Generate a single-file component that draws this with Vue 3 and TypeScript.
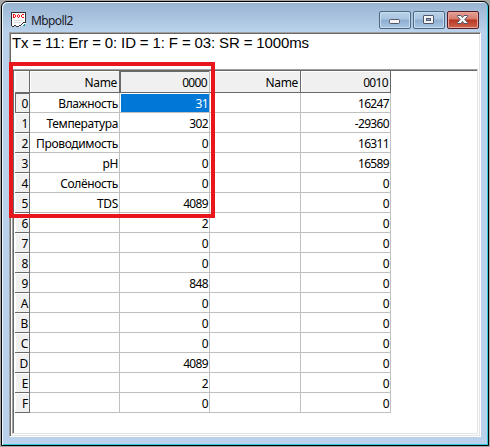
<script setup lang="ts">
import { ref } from 'vue'

interface Row {
  id: string
  name: string
  low: number
  high: number
}

const status = "Tx = 11: Err = 0: ID = 1: F = 03: SR = 1000ms"
const selected = ref("0")

const names = ["Влажность", "Температура", "Проводимость", "pH", "Солёность", "TDS"]
const low = [31, 302, 0, 0, 0, 4089, 2, 0, 0, 848, 0, 0, 0, 4089, 2, 0]
const high = [16247, -29360, 16311, 16589, 0, 0, 0, 0, 0, 0, 0, 0, 0, 0, 0, 0]

const rows: Row[] = low.map((value, i) => ({
  id: i.toString(16).toUpperCase(),
  name: names[i] ?? "",
  low: value,
  high: high[i]
}))
</script>

<template>
<div class="desktop">
  <div class="window">
    <div class="title-bar">
      <svg class="doc-icon" width="16" height="16" viewBox="0 0 16 16" shape-rendering="crispEdges">
        <path d="M1 1H15V11L12 14H10L8 15H6L4 14H2L1 15Z" fill="#fff" />
        <path d="M0 0H15V1H0ZM0 0H1V14H0ZM14 0H15V11H14ZM1 14H3V15H1ZM3 13H5V14H3ZM5 14H8V15H5ZM8 13H10V14H8ZM10 12H11V13H10ZM11 11H12V12H11ZM12 10H15V11H12Z" fill="#333" />
        <path d="M2 2H4V3H2ZM2 2H3V6H2ZM2 5H4V6H2ZM4 3H5V5H4ZM6 3H7V5H6ZM7 2H8V3H7ZM7 5H8V6H7ZM8 3H9V5H8ZM10 3H11V5H10ZM11 2H13V3H11ZM11 5H13V6H11Z" fill="#e81010" />
        <path d="M3 8H12V9H3ZM3 10H10V11H3Z" fill="#ddd" />
        <path d="M13 12H14V13H13ZM12 13H14V14H12Z" fill="#168d8d" />
      </svg>
      <div class="title">Mbpoll2</div>
      <div class="buttons">
        <button class="button">
          <svg width="32" height="18" viewBox="0 0 32 18">
            <rect x="10.5" y="8.5" width="10" height="4" rx="1" fill="#f5f5f5" stroke="#535666" />
          </svg>
        </button>
        <button class="button">
          <svg width="32" height="18" viewBox="0 0 32 18">
            <rect x="10.5" y="4.5" width="10" height="8" rx="0.5" fill="#f5f5f5" stroke="#535666" />
            <rect x="13.5" y="7.5" width="4" height="2" fill="#8bacd0" stroke="#535666" />
          </svg>
        </button>
        <button class="button close">
          <svg width="32" height="18" viewBox="0 0 32 18">
            <path d="M10.5 4.5H14L15.5 6.5L17 4.5H20.5V5.5L17.8 8.5L20.5 11.5V12.5H17L15.5 10.5L14 12.5H10.5V11.5L13.2 8.5L10.5 5.5Z" fill="#f5f5f5" stroke="#535666" />
          </svg>
        </button>
      </div>
    </div>
    <div class="client">
      <div class="status">{{ status }}</div>
      <div class="grid-box">
        <div class="row header">
          <div class="cell index"></div>
          <div class="cell">Name</div>
          <div class="cell number current">0000</div>
          <div class="cell wide">Name</div>
          <div class="cell number">0010</div>
        </div>
        <div class="row" v-for="row in rows" :key="row.id">
          <div class="cell index" :class="{ current: row.id == selected }">{{ row.id }}</div>
          <div class="cell">{{ row.name }}</div>
          <div class="cell number" :class="{ selected: row.id == selected }" @click="selected = row.id">
            <span>{{ row.low }}</span>
          </div>
          <div class="cell wide"></div>
          <div class="cell number">{{ row.high }}</div>
        </div>
      </div>
    </div>
  </div>
  <div class="highlight"></div>
</div>
</template>

<style>
body {
  margin: 0;
  overflow: hidden;
}
</style>

<style scoped>
.desktop {
  position: relative;
  box-sizing: border-box;
  width: 490px;
  height: 447px;
  padding: 1px;
  background: #a5a5a5;
  font-family: "Noto Sans", "Open Sans", sans-serif;
  color: #000;
}

.window {
  box-sizing: border-box;
  width: 488px;
  height: 445px;
  padding: 0 7px 7px 7px;
  border: 1px solid #000;
  border-radius: 6px 6px 0 0;
  background: linear-gradient(#98b3d2, #b9d1ea 29px);
  box-shadow: inset 1px 1px 0 #eef5fb, inset -1px -1px 0 #31cbdc;
}

.title-bar {
  display: flex;
  box-sizing: border-box;
  height: 30px;
  padding: 9px 2px 0 2px;
}

.doc-icon {
  margin-top: 1px;
}

.title {
  flex: 1;
  margin-left: 4px;
  font-size: 12px;
  letter-spacing: -0.6px;
  line-height: 20px;
  color: #1b1b2b;
}

.buttons {
  display: flex;
  gap: 2px;
}

.button {
  box-sizing: border-box;
  width: 32px;
  height: 18px;
  padding: 0;
  border: 1px solid #4f6680;
  border-radius: 2px;
  background: linear-gradient(#b9d0e8 0, #aac5e1 7px, #8eaed0 8px, #a9c7e6);
  box-shadow: inset 0 0 0 1px #c6dcf1;
}

.button svg {
  display: block;
  margin: -1px;
}

.close {
  border-color: #561d25;
  background: linear-gradient(#e5a297 0, #d67b6c 7px, #b93521 8px, #cd6650);
  box-shadow: inset 0 0 0 1px #e9a79b;
}

.client {
  box-sizing: border-box;
  width: 472px;
  height: 405px;
  padding: 0 2px 1px 1px;
  border: 1px solid;
  border-color: #a0a0a0 #fff #fff #a0a0a0;
  background: #fff;
  box-shadow: inset 1px 1px 0 #696969, inset -1px -1px 0 #e3e3e3;
}

.status {
  box-sizing: border-box;
  height: 36px;
  padding: 0 0 0 1px;
  font-family: "Liberation Sans", Arial, sans-serif;
  font-size: 15px;
  letter-spacing: -0.13px;
  line-height: 20px;
  white-space: nowrap;
}

.grid-box {
  box-sizing: border-box;
  width: 466px;
  height: 365px;
  margin-left: 1px;
  padding: 1px 0 0 2px;
  border: 1px solid;
  border-color: #a0a0a0 #e3e3e3 #e3e3e3 #a0a0a0;
  box-shadow: inset 1px 1px 0 #696969;
}

.row {
  display: flex;
  height: 20px;
}

.cell {
  box-sizing: border-box;
  width: 90px;
  padding-right: 1px;
  border-right: 1px solid #c0c0c0;
  border-bottom: 1px solid #c0c0c0;
  font-size: 12px;
  letter-spacing: -0.35px;
  line-height: 22px;
  text-align: right;
  white-space: nowrap;
}

.number {
  letter-spacing: -0.65px;
}

.wide {
  width: 91px;
}

.header {
  height: 22px;
}

.header .cell {
  padding-right: 2px;
  border-right-color: #696969;
  border-bottom-color: #696969;
  background: #f0f0f0;
  box-shadow: inset 1px 1px 0 #fff;
  line-height: 24px;
}

.header .current {
  border-right-color: #c0c0c0;
  box-shadow: inset 1px 1px 0 #696969;
}

.cell.index {
  width: 15px;
  padding-right: 1px;
  border-color: #696969;
  background: #f0f0f0;
  box-shadow: inset 1px 1px 0 #fff;
}

.index.current {
  box-shadow: inset 1px 1px 0 #696969;
}

.number.selected {
  padding: 1px 0 0 1px;
}

.selected span {
  display: block;
  height: 18px;
  padding-right: 1px;
  background: #0078d7;
  color: #fff;
  line-height: 20px;
}

.highlight {
  position: absolute;
  left: 9px;
  top: 62px;
  box-sizing: border-box;
  width: 206px;
  height: 156px;
  border: 4px solid #e9171b;
  pointer-events: none;
}
</style>
